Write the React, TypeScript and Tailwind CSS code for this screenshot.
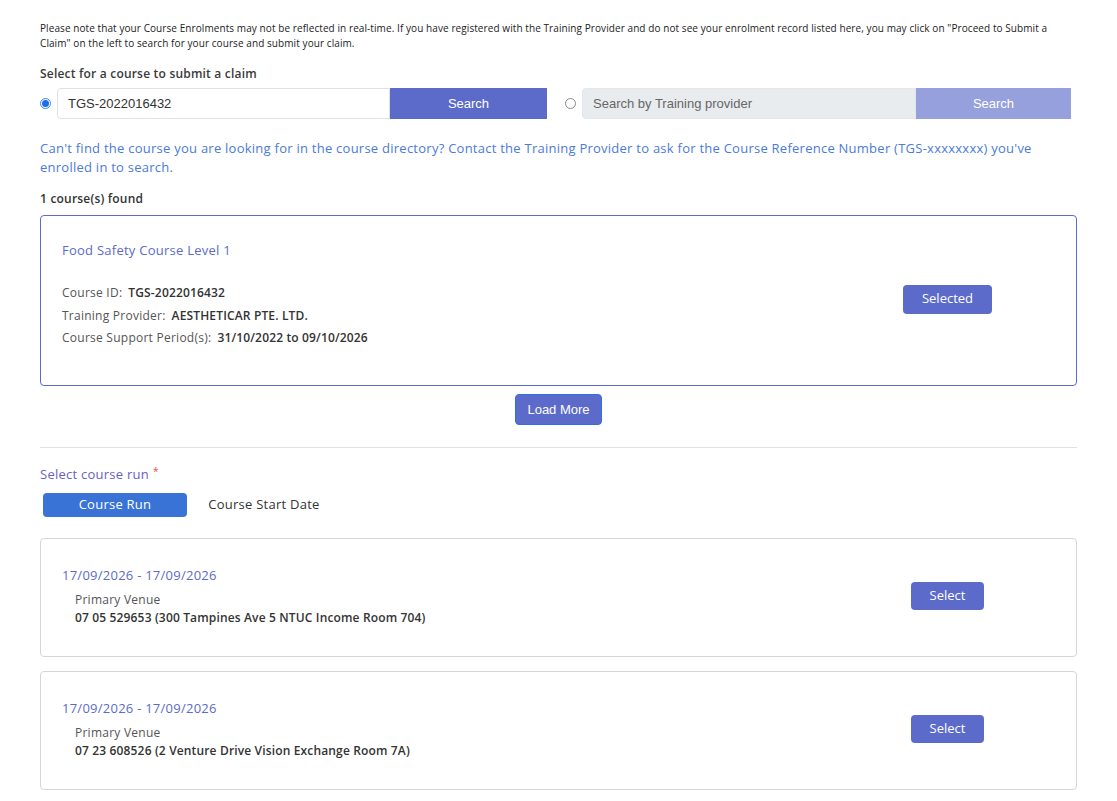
import React from 'react';

const SANS = "font-['Open_Sans','Noto_Sans',sans-serif]";
const ARIAL = "font-['Liberation_Sans',Arial,sans-serif] tracking-normal";

interface CourseRun {
  dates: string;
  venue: string;
}

const runs: CourseRun[] = [
  { dates: '17/09/2026 - 17/09/2026', venue: '07 05 529653 (300 Tampines Ave 5 NTUC Income Room 704)' },
  { dates: '17/09/2026 - 17/09/2026', venue: '07 23 608526 (2 Venture Drive Vision Exchange Room 7A)' },
];

const Radio: React.FC<{ checked?: boolean }> = ({ checked }) =>
  checked ? (
    <span className="flex h-[11px] w-[11px] shrink-0 items-center justify-center rounded-full border border-[#3b82f6] bg-white">
      <span className="h-[7px] w-[7px] rounded-full bg-[#1d6fe8]" />
    </span>
  ) : (
    <span className="h-[11px] w-[11px] shrink-0 rounded-full border border-[#8a8a8a] bg-white" />
  );

const App: React.FC = () => {
  return (
    <div className={`${SANS} min-h-screen bg-white px-[40px] pb-[10px] pt-[21px] tracking-[0.25px] text-[#333333]`} style={{ width: 1117 }}>
      {/* Notice */}
      <p className="text-[10px] leading-[15px] tracking-[0.08px] text-[#222222]">
        Please note that your Course Enrolments may not be reflected in real-time. If you have registered with the Training Provider and do not see your enrolment record listed here, you may click on "Proceed to Submit a
        <br />
        Claim" on the left to search for your course and submit your claim.
      </p>

      <div className="mt-[14px] text-[12px] font-semibold leading-[18px] tracking-[0.2px] text-[#3a3a3a]">Select for a course to submit a claim</div>

      {/* Search row */}
      <div className="mt-[5px] flex items-center gap-[18px]">
        <div className="flex w-[507px] items-center">
          <Radio checked />
          <div className="ml-[6px] flex h-[31px] flex-1 items-center rounded-l-[4px] border border-[#dde1e6] bg-white px-[10px]">
            <span className={`${ARIAL} text-[13px] text-[#333333]`}>TGS-2022016432</span>
          </div>
          <button className={`${ARIAL} h-[31px] w-[157px] bg-[#5c6bc9] text-[13px] text-white`}>Search</button>
        </div>
        <div className="flex w-[506px] items-center">
          <Radio />
          <div className="ml-[6px] flex h-[31px] flex-1 items-center rounded-l-[4px] border border-[#e3e6ea] bg-[#e9ecef] px-[10px]">
            <span className={`${ARIAL} text-[13px] text-[#666666]`}>Search by Training provider</span>
          </div>
          <button className={`${ARIAL} h-[31px] w-[155px] bg-[#96a0dc] text-[13px] text-white`}>Search</button>
        </div>
      </div>

      <p className="mt-[20px] text-[13px] leading-[19px] tracking-[0.25px] text-[#4a7bd9]">
        Can't find the course you are looking for in the course directory? Contact the Training Provider to ask for the Course Reference Number (TGS-xxxxxxxx) you've
        <br />
        enrolled in to search.
      </p>

      <div className="mt-[13px] text-[12px] font-semibold leading-[18px] tracking-[0.2px] text-[#333333]">1 course(s) found</div>

      {/* Course card */}
      <div className="mt-[7px] flex h-[171px] items-center rounded-[4px] border border-[#5c6bc9] pl-[21px] pr-[20px]">
        <div className="flex-1 self-start pt-[25px]">
          <div className="text-[13px] leading-[18px] text-[#5c6bc9]">Food Safety Course Level 1</div>
          <div className="mt-[23px] text-[12px] leading-[22.5px]">
            <div>
              <span className="text-[#555555]">Course ID:</span>
              <span className="ml-[6px] font-semibold tracking-[0.15px] text-[#333333]">TGS-2022016432</span>
            </div>
            <div>
              <span className="text-[#555555]">Training Provider:</span>
              <span className="ml-[6px] font-semibold tracking-[0.15px] text-[#333333]">AESTHETICAR PTE. LTD.</span>
            </div>
            <div>
              <span className="text-[#555555]">Course Support Period(s):</span>
              <span className="ml-[6px] font-semibold tracking-[0.15px] text-[#333333]">31/10/2022 to 09/10/2026</span>
            </div>
          </div>
        </div>
        <div className="flex w-[217px] justify-center">
          <button className="-mt-[3px] h-[29px] w-[89px] rounded-[4px] bg-[#5c6bc9] text-[13px] tracking-normal text-white">Selected</button>
        </div>
      </div>

      <div className="mt-[8px] flex justify-center">
        <button className={`${ARIAL} h-[31px] w-[87px] rounded-[4px] border border-[#2f6fe4] bg-[#5c6bc9] text-[13px] text-white`}>Load More</button>
      </div>

      <hr className="mt-[22px] border-t border-[#dee2e6]" />

      <div className="mt-[17px] text-[13px] leading-[18px] text-[#6a61c6]">
        Select course run
        <span className="relative -top-[4px] ml-[4px] text-[10px] text-[#e5484d]">*</span>
      </div>

      {/* Tabs */}
      <div className="ml-[3px] mt-[9px] flex gap-[5px]">
        <button className="h-[24px] w-[144px] rounded-[4px] bg-[#3a73d6] text-[13px] text-white">Course Run</button>
        <button className="h-[24px] w-[144px] text-[13px] text-[#333333]">Course Start Date</button>
      </div>

      {/* Runs */}
      <div className="mt-[21px] flex flex-col gap-[14px]">
        {runs.map((run, idx) => (
          <div key={idx} className="flex h-[119px] items-center rounded-[4px] border border-[#d6d6d6] pl-[21px] pr-[20px]">
            <div className="flex-1 self-start pt-[27px]">
              <div className="text-[13px] leading-[18px] text-[#5c6bc9]">{run.dates}</div>
              <div className="mt-[7px] pl-[13px] text-[12px] leading-[18px]">
                <div className="text-[#555555]">Primary Venue</div>
                <div className="font-semibold tracking-[0.15px] text-[#333333]">{run.venue}</div>
              </div>
            </div>
            <div className="flex w-[217px] justify-center">
              <button className="-mt-[3px] h-[28px] w-[73px] rounded-[4px] bg-[#5c6bc9] text-[13px] tracking-normal text-white">Select</button>
            </div>
          </div>
        ))}
      </div>
    </div>
  );
};

export default App;
